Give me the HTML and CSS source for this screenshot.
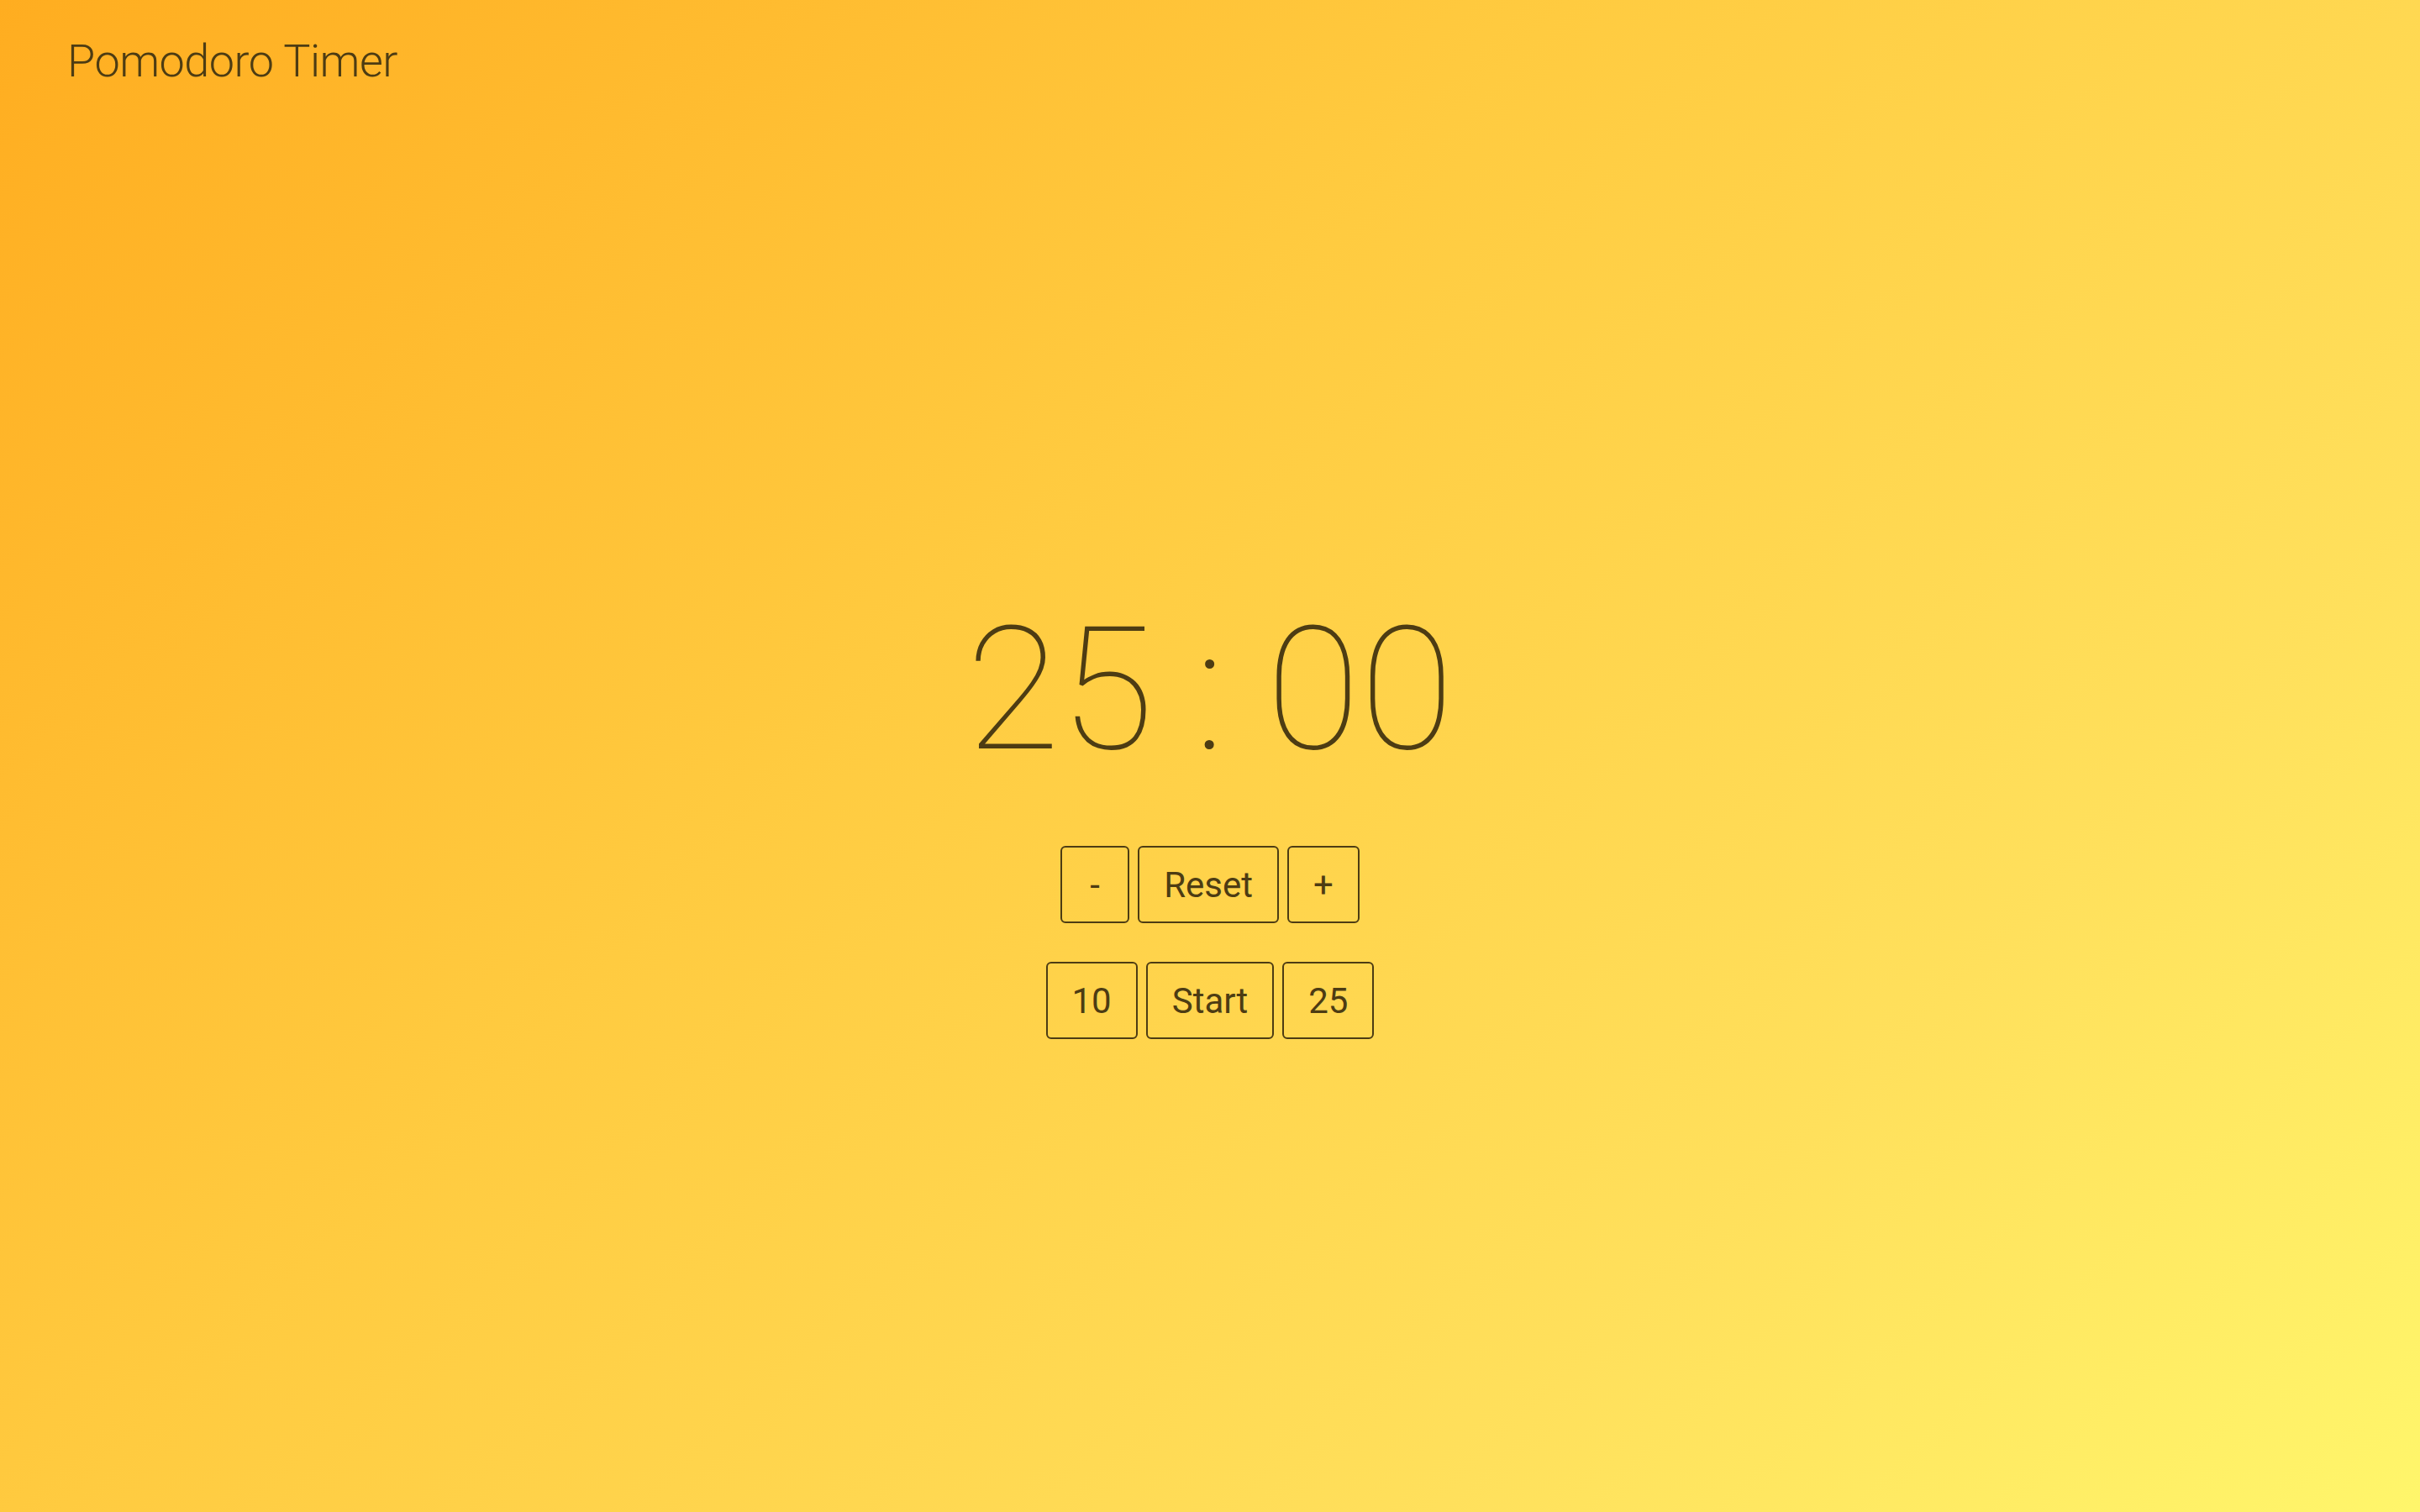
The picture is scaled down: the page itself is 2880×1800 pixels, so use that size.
FILE: index.html
```html
<!DOCTYPE html>
<html lang="en">
<head>
<meta charset="utf-8">
<title>Pomodoro Timer</title>
<link rel="stylesheet" href="styles.css">
</head>
<body>
  <header class="header">
    <h1 class="title">Pomodoro Timer</h1>
  </header>
  <main class="main">
    <div class="clock">25 : 00</div>
    <div class="controls">
      <div class="row">
        <button class="btn">-</button>
        <button class="btn">Reset</button>
        <button class="btn">+</button>
      </div>
      <div class="row">
        <button class="btn">10</button>
        <button class="btn">Start</button>
        <button class="btn">25</button>
      </div>
    </div>
  </main>
</body>
</html>
```
FILE: styles.css
```css
html, body {
  margin: 0;
  padding: 0;
}
body {
  min-height: 100vh;
  background: linear-gradient(135deg, #ffad20 0%, #ffcb40 40%, #ffe05c 75%, #fff66b 100%);
  color: #4d3c13;
  font-family: Roboto, "Liberation Sans", sans-serif;
}
.header {
  padding: 41px 80px 0;
}
.title {
  margin: 0;
  font-size: 54px;
  font-weight: 300;
  letter-spacing: -0.5px;
  line-height: normal;
}
.main {
  display: flex;
  flex-direction: column;
  align-items: center;
  padding-top: 616px;
}
.clock {
  font-size: 204px;
  font-weight: 100;
  line-height: 1;
  white-space: pre;
}
.controls {
  margin-top: 83px;
  display: flex;
  flex-direction: column;
  align-items: center;
  gap: 46px;
}
.row {
  display: flex;
  gap: 10px;
}
.btn {
  min-width: 82px;
  height: 92px;
  padding: 0 29px;
  background: transparent;
  border: 2px solid #4d3c13;
  border-radius: 6px;
  color: #4d3c13;
  font-family: Roboto, "Liberation Sans", sans-serif;
  font-size: 42px;
  font-weight: 400;
}
```
